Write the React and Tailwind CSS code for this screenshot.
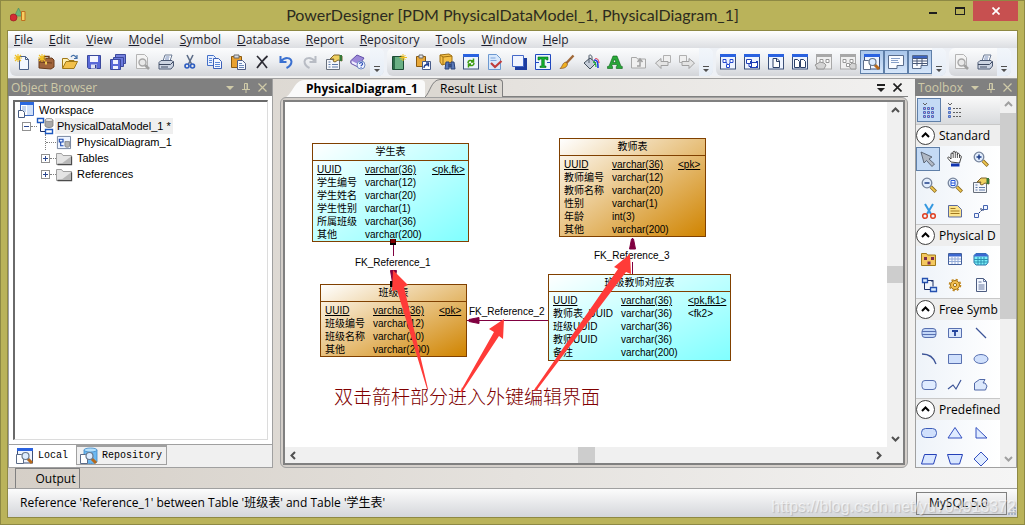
import clsx from "clsx";

const menus = ["File", "Edit", "View", "Model", "Symbol", "Database", "Report", "Repository", "Tools", "Window", "Help"];

const WindowFrame = ({ gray, children }) => (
    <>
        <rect x="0.5" y="0.5" width="15" height="14.5" fill={gray ? "#f0f0f0" : "#eef4ff"} stroke={gray ? "#a8a8a8" : "#3c5078"} />
        <rect x="0" y="0" width="16" height="3" fill={gray ? "#a8a8a8" : "#2a62e0"} />
        {children}
    </>
);

const Lens = ({ x = 6, y = 6, r = 4.8, children }) => (
    <>
        <path d={`M${x + r - 1} ${y + r - 1}l5 5`} stroke="#8a6a20" strokeWidth="3.4" />
        <path d={`M${x + r - 1} ${y + r - 1}l4.5 4.5`} stroke="#f0c850" strokeWidth="1.8" />
        <circle cx={x} cy={y} r={r} fill="#e2edfc" stroke="#76849c" strokeWidth="1.3" />
        {children}
    </>
);

const spark = <path d="M4 0v8M0 4h8M1 1l6 6M7 1l-6 6" stroke="#f0c020" strokeWidth="1.1" />;

const icons = {
    newFile: (
        <>
            <path d="M5.5 2.5h6l3 3v10h-9z" fill="#f4f8ff" stroke="#4a6088" />
            <path d="M11.5 2.5v3h3" fill="none" stroke="#4a6088" />
            {spark}
        </>
    ),
    newProject: (
        <>
            <path d="M6 4.5v-2h5v2" fill="none" stroke="#6a3c1c" strokeWidth="1.4" />
            <path d="M1 5l13-1 2 2v7l-3 2-12-1z" fill="#a0643c" stroke="#6a3c1c" />
            <path d="M1 8l13 1" stroke="#6a3c1c" />
            <path d="M7 7.500h2v3H7z" fill="#f0c850" />
            {spark}
        </>
    ),
    open: (
        <>
            <path d="M.5 14V4.500h5l1.500 2h5V8" fill="#fff0b0" stroke="#a07818" />
            <path d="M.5 14.500L4 7.500h11.500l-3.500 7z" fill="#f2c04a" stroke="#a07818" />
            <path d="M9 3c1.500-2.500 4-2 5.500 1m.5-3v3.500h-3" fill="none" stroke="#4470a8" strokeWidth="1.2" />
        </>
    ),
    save: (
        <>
            <path d="M1.500 1.500h13v13h-12l-1-1z" fill="#5a6ad8" stroke="#3a489c" />
            <path d="M4 2h8v6H4z" fill="#f4f6ff" />
            <path d="M5 10.500h6v4H5z" fill="#e0e4f4" />
            <path d="M9 11h1.500v3H9z" fill="#2c3a90" />
        </>
    ),
    saveAll: (
        <>
            <path d="M5.500.5h10v9h-10z" fill="#7480dc" stroke="#3a489c" />
            <path d="M3.500 3.500h10v9h-10z" fill="#6a78dc" stroke="#3a489c" />
            <path d="M.5 5.500h10v10H.5z" fill="#5a6ad8" stroke="#3a489c" />
            <path d="M3 6h5v4H3zM3 12h5v3H3z" fill="#f0f2ff" />
        </>
    ),
    preview: (
        <>
            <path d="M2.500.5h8l3 3v11h-11z" fill="#f4f4f4" stroke="#b4b4b4" />
            <path d="M11 11l4 4" stroke="#a0a0a0" strokeWidth="2.500" />
            <circle cx="8.500" cy="8.500" r="3.500" fill="#e8e8e8" stroke="#a8a8a8" strokeWidth="1.400" />
        </>
    ),
    print: (
        <>
            <path d="M5 7l2-6h7l-2 6z" fill="#fff" stroke="#6a7a94" />
            <path d="M7.500 3h4M7 5h4" stroke="#7088b8" />
            <path d="M1 8.500l2-2h11l1.500 1.500v4l-2.500 3H1z" fill="#ccd4e2" stroke="#4c5a74" />
            <path d="M1 10.500h11.500l3-3M3 13h7" fill="none" stroke="#3c4860" />
        </>
    ),
    cut: (
        <>
            <path d="M5 1l4.500 9M11 1l-4.500 9" stroke="#5c6c88" strokeWidth="1.600" />
            <circle cx="5" cy="12" r="2" fill="none" stroke="#2c5cc0" strokeWidth="1.600" />
            <circle cx="10.500" cy="12" r="2" fill="none" stroke="#2c5cc0" strokeWidth="1.600" />
        </>
    ),
    copy: (
        <>
            <path d="M1.500 1.500h6l2 2v8h-8z" fill="#e8f0ff" stroke="#4470c8" />
            <path d="M7.500 4.500h5l3 3v7h-8z" fill="#f4f8ff" stroke="#3c60b8" />
            <path d="M3 4.500h3M3 6.500h3M3 8.500h3M9 8.500h5M9 10.500h5M9 12.500h5" stroke="#5c88d8" />
        </>
    ),
    paste: (
        <>
            <path d="M1.500 2.500h10v11h-10z" fill="#e8a030" stroke="#8a5a10" />
            <path d="M4 1h5v3H4z" fill="#d8dce4" stroke="#6a6a6a" />
            <path d="M7.500 6.500h5l3 3v6h-8z" fill="#f4f8ff" stroke="#4c5a84" />
            <path d="M9 9.500h3M9 11.500h5M9 13.500h5" stroke="#6c88b8" />
        </>
    ),
    remove: <path d="M3 2c3 3 7 8 10 12M13.500 2C9 6 6 10 3 14" fill="none" stroke="#2c2c34" strokeWidth="1.700" />,
    undo: <path d="M2.500 2v6h6M3 7.500c4-5 10-4 10.500 0 0 3-2 5-5 6.500" fill="none" stroke="#3a70d0" strokeWidth="2" />,
    redo: <path d="M13.500 2v6h-6M13 7.500c-4-5-10-4-10.500 0 0 3 2 5 5 6.500" fill="none" stroke="#b8bcc4" strokeWidth="2" />,
    props: (
        <>
            <path d="M.5 5.500h13v10H.5z" fill="#f4f6fa" stroke="#68707c" />
            <path d="M2.500 8h2M2.500 10.500h2M2.500 13h2M6 10.500h6M6 13h6" stroke="#5c78a8" />
            <path d="M4 5l4-4h5l3 1v5l-4-1-3 2-2-1 1-2H4z" fill="#f0d060" stroke="#80642c" />
            <path d="M13.500 1H16v6h-2.500z" fill="#387838" />
        </>
    ),
    help: (
        <>
            <path d="M1 6.500L7 1l7 3-5 7-8-2z" fill="#9c88d8" stroke="#6450a8" />
            <path d="M1 6.500v3l8 4v-3" fill="#f0ecff" stroke="#6450a8" />
            <circle cx="11" cy="11" r="4" fill="#f0f4ff" stroke="#7088c0" />
            <path d="M9.600 10c0-2 3-2 3 0 0 1-1.500 1-1.500 2m0 .8v1" fill="none" stroke="#2c50b8" strokeWidth="1.200" />
        </>
    ),
    model: (
        <>
            <path d="M1.500 2.500h11v13h-11z" fill="#6ab084" stroke="#1c4c34" />
            <path d="M2 3h2v12H2z" fill="#2c6c48" />
            <path d="M12 0v7M8.500 3.500H16M9.500 1l5 5M14.500 1l-5 5" stroke="#f0c020" />
        </>
    ),
    shortcut: (
        <>
            <path d="M1.500 2.500h9v10h-9z" fill="#e8a838" stroke="#8a5a10" />
            <path d="M4 1h4v3H4z" fill="#e4e4e4" stroke="#6a6a6a" />
            <path d="M7.500 7.500h8v8h-8z" fill="#fff" stroke="#485c88" />
            <path d="M9 14c0-3 2-3.500 4-3.500m-2-1.500h2.500v3.500" fill="none" stroke="#1c3c90" strokeWidth="1.300" />
        </>
    ),
    find: (
        <>
            <path d="M1 1l9-1 3 2v6L3 11 1 8z" fill="#f4c048" stroke="#a07010" />
            <path d="M1 1l3 2v8M4 3l9-1" fill="none" stroke="#a07010" />
            <path d="M7 8h3v7H6zM12 8h3l1 7h-4zM10 10h2v3h-2z" fill="#5878b8" stroke="#2c4478" />
        </>
    ),
    refresh: (
        <WindowFrame>
            <path d="M5 9c0-3 3-3 5-2M10.500 4.500V8H8M11 9c0 3-3 3-5 2M5.500 13.500V10H8" fill="none" stroke="#3c9c10" strokeWidth="1.500" />
        </WindowFrame>
    ),
    check: (
        <>
            <path d="M1.500.5h8l4 4v11h-12z" fill="#d8e8fc" stroke="#6c98d0" />
            <path d="M3.500 4h5M3.500 6.500h6" stroke="#7ca4dc" />
            <path d="M4 9l4 4 6.500-6" fill="none" stroke="#c03c3c" strokeWidth="2.200" />
        </>
    ),
    shadow: (
        <>
            <path d="M4 4h12v12H4z" fill="#1c3ca0" />
            <path d="M1.500 1.500h11v11h-11z" fill="#f0f4ff" stroke="#4468c8" />
        </>
    ),
    textSize: (
        <>
            <path d="M.5.5h15v15H.5z" fill="#e8f4ff" stroke="#2048c0" />
            <path d="M3 3h10v3h-1.500l-.5-1H9.300v7H11v1.500H5V12h1.700V5H5l-.5 1H3z" fill="#10b030" stroke="#046818" strokeWidth=".6" />
            <path d="M0 8.500h4M12 8.500h4" stroke="#2048c0" />
        </>
    ),
    brush: (
        <>
            <path d="M14.500 1.500L7 9.500" stroke="#a06838" strokeWidth="2.400" />
            <path d="M7 8c-4 1-3 4-6 6.500 4 0 7-1 7.500-4.500z" fill="#f0b020" stroke="#80502c" strokeWidth=".7" />
        </>
    ),
    fill: (
        <>
            <path d="M1 9l6-5 6 5-6 6z" fill="#c4ccd8" stroke="#44505c" />
            <path d="M6 9V2c0-2 3-1 3 1v3" fill="none" stroke="#505c6c" />
            <path d="M11 6c3 0 4 1 4 8" fill="none" stroke="#2040e0" strokeWidth="1.600" />
            <path d="M12 5c2-1 3.500 0 4 4" fill="none" stroke="#e02040" />
            <path d="M10 8c2 0 3 1 3 5" fill="none" stroke="#20b040" strokeWidth="1.300" />
        </>
    ),
    font: <path d="M.5 14.500h5v-2l-.8-.3.6-1.700h4.400l.6 1.700-1 .3v2h6v-2l-1.300-.3L10 2H6L2 12.200l-1.500.3zM6 8.500L7.600 5 9 8.500z" fill="#28a838" stroke="#0c6018" strokeWidth=".6" />,
    up: (
        <>
            <path d="M.5 3.500h5l1 1.500h8v9H.5z" fill="#f0f0f0" stroke="#a8a8a8" />
            <path d="M6 12h3V6m-2.500 2L9 5l2.500 3" fill="none" stroke="#a0a0a0" strokeWidth="1.500" />
        </>
    ),
    back: (
        <>
            <path d="M8.500 1.500h7v7h-7z" fill="#f0f0f0" stroke="#b0b0b0" />
            <path d="M.5 9L6 4.500v3h7v4H6v3z" fill="#e4e4e4" stroke="#a0a0a0" />
        </>
    ),
    forward: (
        <>
            <path d="M.5 1.500h7v7h-7z" fill="#f0f0f0" stroke="#b0b0b0" />
            <path d="M15.500 9L10 4.500v3H3v4h7v3z" fill="#e4e4e4" stroke="#a0a0a0" />
        </>
    ),
    viewTree: (
        <WindowFrame>
            <path d="M3 5.500h3v3H3zM10 5.500h3v3h-3zM6.500 10.500h3v3h-3zM6 8l1.500 2.500M10.500 8L9 10.500" fill="#fff" stroke="#2448d0" />
        </WindowFrame>
    ),
    viewNodes: (
        <WindowFrame>
            <path d="M2.500 5.500h5v4h-5zM7.500 8.500h6v5h-6zM5 9.500v3h2.500" fill="#fff" stroke="#2040b8" />
            <path d="M6 7h2v2H6zM12 7h2v2h-2zM6 12h2v2H6zM12 12h2v2h-2z" fill="#2040b8" />
        </WindowFrame>
    ),
    viewPage: (
        <WindowFrame>
            <path d="M5 4.500h4l2.500 2.500v6.500H5z" fill="#fff" stroke="#2c4068" />
            <path d="M8.500 4.500v3h3" fill="none" stroke="#2c4068" />
        </WindowFrame>
    ),
    viewPages: (
        <WindowFrame>
            <path d="M2.500 5.500h3l2 2v6h-5zM8.500 5.500h3l2 2v6h-5z" fill="#fff" stroke="#2c4068" />
        </WindowFrame>
    ),
    grayTree: (
        <WindowFrame gray>
            <path d="M4 5.500h3v3H4zM10 5.500h3v3h-3z" fill="#fff" stroke="#989898" />
            <path d="M-1 11l5-3 4 1 2 2-2 4H2z" fill="#d4d4d4" stroke="#989898" />
        </WindowFrame>
    ),
    grayTree2: (
        <WindowFrame gray>
            <path d="M3 5.500h3v3H3zM10 5.500h3v3h-3zM6.500 9.500h3v3h-3z" fill="#fff" stroke="#989898" />
            <path d="M9 12l3-3 4 1v5h-5z" fill="#d4d4d4" stroke="#989898" />
        </WindowFrame>
    ),
    browser: (
        <WindowFrame>
            <path d="M-.5 6.500h5l2 2v7h-7z" fill="#fff" stroke="#5c6c88" />
            <path d="M10 10l5 5" stroke="#b86818" strokeWidth="3" />
            <circle cx="8.500" cy="8" r="3.500" fill="#dcecff" stroke="#68788c" strokeWidth="1.200" />
        </WindowFrame>
    ),
    repository: (
        <>
            <path d="M3 2v12c1 2 12 2 13 0V2z" fill="#6cb8f0" stroke="#3c88c8" strokeWidth=".8" />
            <ellipse cx="9.500" cy="2" rx="6.500" ry="2" fill="#b4e0fc" stroke="#3c88c8" strokeWidth=".8" />
            <path d="M-.5 6.500h5l2 2v7h-7z" fill="#fff" stroke="#5c6c88" />
            <path d="M10 10l5 5" stroke="#b86818" strokeWidth="3" />
            <circle cx="8.500" cy="8" r="3.500" fill="#dcecff" stroke="#68788c" strokeWidth="1.200" />
        </>
    ),
    output: (
        <>
            <path d="M.5 1.500h15v10H9v3H.5z" fill="#fafcff" stroke="#586c8c" />
            <path d="M3 4.500h9M3 6.500h7M3 8.500h8" stroke="#88a0c8" />
        </>
    ),
    list: (
        <>
            <path d="M.5 1.500h15v10H9v3H.5z" fill="#fafcff" stroke="#586c8c" />
            <path d="M1 4.500h14M1 7h14M1 9.500h14M5 2v10M10 2v10" stroke="#485878" />
            <path d="M1 2h14v2H1z" fill="#3c64c0" />
        </>
    ),
    pointer: <path d="M1 1l3 11 2.500-2.500L12 15.500l2.500-2.500-5.500-5L12 6z" fill="#b0b8c4" stroke="#545c6c" strokeWidth=".9" />,
    hand: (
        <>
            <path d="M4 11L1 7.500c-1-1.500 1-2 2-.5l1 1V3c0-1.500 2-1.500 2 0V1.500C6-.2 8.200-.2 8.200 1.500V2c0-1.500 2.200-1.500 2.200.2V3.500c0-1.500 2.100-1.500 2.100.2V5c1-1 2 0 1.800 1L12.500 12z" fill="#fff" stroke="#303030" strokeWidth=".9" />
            <path d="M6.200 3v4M8.300 2v5M10.400 3v4M12.500 4v3" stroke="#303030" strokeWidth=".8" />
            <path d="M4 12.500h8.500v3H4z" fill="#1034b0" />
        </>
    ),
    zoomIn: <Lens><path d="M3.500 6h5M6 3.500v5" stroke="#1c3c88" strokeWidth="1.500" /></Lens>,
    zoomOut: <Lens><path d="M3.500 6h5" stroke="#1c3c88" strokeWidth="1.500" /></Lens>,
    zoomFit: <Lens><path d="M4 3.500h4v5H4zM4 6h4" fill="#fff" stroke="#2858d8" /></Lens>,
    scissors: (
        <>
            <path d="M4 1l6 10M12 1L6 11" stroke="#3498e0" strokeWidth="2" />
            <circle cx="4" cy="13" r="2.300" fill="none" stroke="#e04020" strokeWidth="1.500" />
            <circle cx="12" cy="13" r="2.300" fill="none" stroke="#e04020" strokeWidth="1.500" />
        </>
    ),
    note: (
        <>
            <path d="M1.500 2.500h9l4 4v7.500h-13z" fill="#fce48c" stroke="#5a6aa0" />
            <path d="M3.500 5.500h5M3.500 8h9M3.500 10.500h9" stroke="#a07820" />
        </>
    ),
    link: (
        <>
            <path d="M1.500 10.500h4v4h-4zM10.500 2.500h4v4h-4z" fill="#f0f4ff" stroke="#4464b0" />
            <path d="M6 10l4-4M7 6h3v3" fill="none" stroke="#1c3470" strokeDasharray="2 1" />
        </>
    ),
    package: (
        <>
            <path d="M.5 2.500h5l1 1.500h8v10.500H.5z" fill="#f4c860" stroke="#a07818" />
            <path d="M3 6h3v3H3zM10 6h3v3h-3zM6.500 10.500h3v3h-3z" fill="#7c2c50" />
        </>
    ),
    table: (
        <>
            <path d="M1.500 2.500h13v11h-13z" fill="#f8faff" stroke="#44609c" />
            <path d="M2 3h12v2.500H2z" fill="#3c68d0" />
            <path d="M2 8h12M2 10.500h12M5 6v7M8 6v7M11 6v7" stroke="#94acd8" />
        </>
    ),
    viewTable: (
        <>
            <path d="M3 2.500h10l2 2v7l-2 2.500H3l-2-2.500v-7z" fill="#7cf0f8" stroke="#2870a8" />
            <path d="M3 2.500h10l2 2v1H1v-1z" fill="#3c68d0" />
            <path d="M1 8.500h14M1 11h14M5 6v8M8 6v8M11 6v8" stroke="#2890b0" />
        </>
    ),
    reference: (
        <>
            <path d="M1.500 1.500h5v4h-5zM9.500 10.500h6v4h-6z" fill="#d8ecff" stroke="#2450b0" strokeWidth="1.300" />
            <path d="M3.500 5.500v7H9M7 3.500h5v6M10.500 5L12 3.500" fill="none" stroke="#1c3068" />
        </>
    ),
    procedure: (
        <>
            <circle cx="8" cy="8" r="4.500" fill="#f4c050" stroke="#a07010" />
            <circle cx="8" cy="8" r="5.500" fill="none" stroke="#c08820" strokeWidth="1.600" strokeDasharray="2.200 2.120" />
            <circle cx="8" cy="8" r="1.600" fill="#fff" stroke="#a07010" />
        </>
    ),
    file: (
        <>
            <path d="M3.500 1.500h7l3 3v10h-10z" fill="#f4f8ff" stroke="#4c5c80" />
            <path d="M10.500 1.500v3h3M5.500 5h3M5.500 8h6M5.500 10h6M5.500 12h6" fill="none" stroke="#6878a0" />
        </>
    ),
    title: (
        <>
            <rect x="1" y="3.500" width="14" height="9" rx="3" fill="#c4d8f8" stroke="#5870b0" />
            <path d="M1 6.500h14M1 9.500h14" stroke="#5870b0" />
        </>
    ),
    textBox: (
        <>
            <path d="M1.500 3.500h13v9h-13z" fill="#dce8fc" stroke="#5870b0" />
            <path d="M5 6h6M8 6v5" stroke="#24449c" strokeWidth="1.800" />
        </>
    ),
    line: <path d="M3 3l10 10" stroke="#3c5498" strokeWidth="1.300" />,
    arc: <path d="M1 3c7 0 12 4 14 10" fill="none" stroke="#3c5498" strokeWidth="1.300" />,
    rect: <path d="M1.500 3.500h13v9h-13z" fill="#d0e0fc" stroke="#5870b0" />,
    ellipse: <ellipse cx="8" cy="8" rx="7" ry="4.500" fill="#d0e0fc" stroke="#5870b0" />,
    rounded: <rect x="1" y="3.500" width="14" height="9" rx="3" fill="#e0ecff" stroke="#5870b0" />,
    polyline: <path d="M1 12l5-4 3 4 5-9" fill="none" stroke="#3c5498" strokeWidth="1.200" />,
    polygon: <path d="M1.500 13V6l5-3.500H12l-2 3.500h2l2 3-1.500 4z" fill="#dce8fc" stroke="#5068a8" />,
    octagon: <rect x=".5" y="3.500" width="15" height="9" rx="4" fill="#d0e0fc" stroke="#3c5cb8" />,
    triangle: <path d="M8 2.500L15 13H1z" fill="#e0ecff" stroke="#3450c0" />,
    rightTriangle: <path d="M3 2.500V13h11z" fill="#e0ecff" stroke="#3450c0" />,
    parallelogram: <path d="M3.500 3.500h12L12.500 13H.5z" fill="#d8e6ff" stroke="#2440b8" />,
    trapezoid: <path d="M.5 3.500h15l-3 9.500h-9z" fill="#d8e6ff" stroke="#2440b8" />,
    diamond: <path d="M8 1l7 7-7 7-7-7z" fill="#e0ecff" stroke="#3450c0" />,
    folder: (
        <>
            <path d="M.5 3.500h5l1.500 2h8.500v9H.5z" fill="#e4e4e4" stroke="#a0a0a0" />
            <path d="M1.500 14.500h14V6.500" fill="none" stroke="#4c4c4c" strokeWidth="1.300" />
            <path d="M5 14L15 6.500V14z" fill="#b8b8b8" />
        </>
    ),
    workspace: (
        <>
            <path d="M2.500.5h13v13h-13z" fill="#fff" stroke="#3c68c0" />
            <path d="M2 0h14v3H2z" fill="#2a68e0" />
            <path d="M4 5h4M4 7h4M4 9h4" stroke="#88a8d8" />
            <path d="M9 3h6v10H9z" fill="#d0e0f8" />
            <path d="M.5 8.500h4l2 2v5h-6z" fill="#fff" stroke="#485c80" />
        </>
    ),
    dataModel: (
        <>
            <path d="M.5.500h6v4h-6zM8.500 11.500h7v4h-7z" fill="#fff" stroke="#1c58c0" strokeWidth="1.400" />
            <path d="M3.500 5v8.500H8" fill="none" stroke="#1c3068" />
            <path d="M8 2v6c1 2 7 2 8 0V2z" fill="#a8a8a8" stroke="#707070" strokeWidth=".7" />
            <ellipse cx="12" cy="2" rx="4" ry="1.600" fill="#e8e8e8" stroke="#808080" strokeWidth=".7" />
        </>
    ),
    diagram: (
        <>
            <path d="M1.500 1.500h14v13h-14z" fill="#eef4ff" stroke="#70809c" />
            <path d="M3.500 4.500h4v3h-4zM5 8v3.500h3" fill="none" stroke="#1c48b0" strokeWidth="1.200" />
            <path d="M9.500 7v5c1 1.500 4 1.500 5 0V7z" fill="#b4b4b4" stroke="#707070" strokeWidth=".7" />
        </>
    ),
};

const Icon = ({ name, className }) => (
    <svg viewBox="0 0 16 16" className={clsx("size-4 shrink-0 overflow-visible", className)} aria-hidden="true">
        {icons[name]}
    </svg>
);

const toolbars = [
    ["newFile", "newProject", "open", "save", "saveAll", "preview", "print", "cut", "copy", "paste", "remove", "undo", "redo", "props", "help"],
    ["model", "shortcut", "find", "refresh", "check", "shadow", "textSize", "brush", "fill", "font", "up", "back", "forward"],
    ["viewTree", "viewNodes", "viewPage", "viewPages", "grayTree", "grayTree2", "browser", "output", "list"],
    ["preview", "print"],
];
const pressed = ["browser", "output", "list"];

const toolbox = [
    { title: "Standard", items: ["pointer", "hand", "zoomIn", "zoomOut", "zoomFit", "props", "scissors", "note", "link"] },
    { title: "Physical D", items: ["package", "table", "viewTable", "reference", "procedure", "file"] },
    { title: "Free Symb", items: ["title", "textBox", "line", "arc", "rect", "ellipse", "rounded", "polyline", "polygon"] },
    { title: "Predefined", items: ["octagon", "triangle", "rightTriangle", "parallelogram", "trapezoid", "diamond"] },
];

const entities = [
    {
        name: "学生表",
        box: "left-[27px] top-[41px] w-[157px] to-[#80ffff]",
        cols: ["w-12", "w-[67px]"],
        rows: [["UUID", "varchar(36)", "<pk,fk>"], ["学生编号", "varchar(12)"], ["学生姓名", "varchar(20)"], ["学生性别", "varchar(1)"], ["所属班级", "varchar(36)"], ["其他", "varchar(200)"]],
    },
    {
        name: "班级表",
        box: "left-[35px] top-[182px] w-[147px] to-[#d08400]",
        cols: ["w-12", "w-[66px]"],
        rows: [["UUID", "varchar(36)", "<pk>"], ["班级编号", "varchar(12)"], ["班级名称", "varchar(20)"], ["其他", "varchar(200)"]],
    },
    {
        name: "教师表",
        box: "left-[274px] top-[36px] w-[147px] to-[#d08400]",
        cols: ["w-12", "w-[66px]"],
        rows: [["UUID", "varchar(36)", "<pk>"], ["教师编号", "varchar(12)"], ["教师名称", "varchar(20)"], ["性别", "varchar(1)"], ["年龄", "int(3)"], ["其他", "varchar(200)"]],
    },
    {
        name: "班级教师对应表",
        box: "left-[263px] top-[172px] w-[183px] to-[#80ffff] pb-px",
        cols: ["w-17", "w-[67px]"],
        rows: [["UUID", "varchar(36)", "<pk,fk1>"], ["教师表_UUID", "varchar(36)", "<fk2>"], ["班级UUID", "varchar(36)"], ["教师UUID", "varchar(36)"], ["备注", "varchar(200)"]],
    },
];

function Chevron({ dir, className }) {
    const paths = { up: "M1 6l3.500-3.500L8 6", down: "M1 3l3.500 3.500L8 3", left: "M6 1L2.500 4.500 6 8", right: "M3 1l3.500 3.500L3 8" };
    return (
        <svg viewBox="0 0 9 9" className={clsx("size-[9px]", className)} fill="none" stroke="currentColor" strokeWidth="2" aria-hidden="true">
            <path d={paths[dir]} />
        </svg>
    );
}

function PanelHeader({ title }) {
    return (
        <div className="flex h-[17px] shrink-0 items-center bg-[#808080] pr-[2px] pl-[3px] text-[#cfcaa8]">
            <h2 className="flex-1 text-xs leading-4">{title}</h2>
            <button aria-label="Menu" className="flex w-4 justify-center">
                <svg viewBox="0 0 8 4" className="h-1 w-2" fill="currentColor"><path d="M0 0h8L4 4z" /></svg>
            </button>
            <button aria-label="Pin" className="flex w-4 justify-center">
                <svg viewBox="0 0 8 10" className="h-[10px] w-2" fill="none" stroke="currentColor"><path d="M2.500 6V.5h3V6M5 1v5M0 6.500h8M4 7v3" /></svg>
            </button>
            <button aria-label="Close" className="flex w-4 justify-center">
                <svg viewBox="0 0 9 9" className="size-[9px]" stroke="currentColor" strokeWidth="1.200"><path d="M.5.5l8 8M8.500.5l-8 8" /></svg>
            </button>
        </div>
    );
}

function TitleBar() {
    return (
        <header className="grid h-[29px] shrink-0 grid-cols-[1fr_auto_1fr] items-start">
            <svg viewBox="0 0 16 14" className="mt-[7px] ml-[3px] h-[14px] w-4" aria-hidden="true">
                <path d="M8.500 0l4 8h-8z" fill="#6cb878" stroke="#3c8464" strokeWidth=".6" />
                <circle cx="3.500" cy="9.500" r="3.500" fill="#d42c34" stroke="#90141c" strokeWidth=".6" />
                <path d="M11.500 3.500h3.500v9h-3.500z" fill="#f8d060" stroke="#c07020" />
            </svg>
            <h1 className="pt-[2px] text-base leading-6 text-[#2c2b20] [font-family:Lato,sans-serif]">PowerDesigner [PDM PhysicalDataModel_1, PhysicalDiagram_1]</h1>
            <div className="flex justify-end">
                <button aria-label="Minimize" className="flex h-5 w-[27px] items-center justify-center pt-1">
                    <span className="h-[2px] w-2 bg-[#1e1e1e]" />
                </button>
                <button aria-label="Maximize" className="flex h-5 w-[27px] items-center justify-center">
                    <span className="h-2 w-[10px] border border-t-2 border-[#1e1e1e]" />
                </button>
                <button aria-label="Close" className="flex h-5 w-[45px] items-center justify-center bg-[#c75050] text-white">
                    <svg viewBox="0 0 8 8" className="size-2" stroke="currentColor" strokeWidth="1.700"><path d="M.5.5l7 7M7.500.5l-7 7" /></svg>
                </button>
            </div>
        </header>
    );
}

function Toolbars() {
    return (
        <div className="flex h-[30px] shrink-0 gap-[3px] border-b-2 border-[#f0f0f0] bg-[#eef1f6] pl-[2px]">
            {toolbars.map((group, i) => (
                <div key={i} className="flex rounded-md bg-linear-to-b from-[#fbfcfd] via-[#eceef1] to-[#d3d5d9]">
                    {group.map((name) => (
                        <button
                            key={name}
                            aria-label={name}
                            className={clsx("flex h-7 w-6 items-center justify-center", pressed.includes(name) && i === 2 && "my-[2px] h-6! border border-[#5f7fa8] bg-linear-to-b from-[#a9c6ea] to-[#d6e6fa]")}
                        >
                            <Icon name={name} />
                        </button>
                    ))}
                    <button aria-label="Toolbar options" className="flex w-[14px] items-end justify-center rounded-r-md bg-linear-to-b from-[#f2f6fb] to-[#e6edf6] pb-1">
                        <svg viewBox="0 0 6 6" className="size-[6px]" fill="#505050"><path d="M0 0h6v1H0zM0 3h6L3 6z" /></svg>
                    </button>
                </div>
            ))}
        </div>
    );
}

const Expander = ({ open }) => (
    <button aria-label="Toggle" className="z-10 flex size-[9px] shrink-0 items-center justify-center border border-[#919191] bg-white">
        <svg viewBox="0 0 5 5" className="size-[5px]" stroke="#2c4890"><path d={open ? "M0 2.500h5" : "M0 2.500h5M2.500 0v5"} /></svg>
    </button>
);

function ObjectBrowser() {
    return (
        <aside className="flex w-[265px] shrink-0 flex-col border-r border-b border-[#a0a0a0] bg-[#f0f0f0]">
            <PanelHeader title="Object Browser" />
            <div className="flex min-h-0 flex-1 flex-col border-b border-l border-[#a0a0a0] bg-white p-1">
                <ul className="flex-1 border-t-2 border-r border-b border-l-2 border-[#dcdcdc] border-t-[#6a6a6a] border-l-[#6a6a6a] pl-[3px] text-[11px] leading-4 text-black [font-family:'Liberation_Sans',sans-serif]">
                    <li className="flex h-4 items-center gap-[5px]">
                        <Icon name="workspace" />
                        Workspace
                    </li>
                    <li className="flex h-4 items-center pl-1">
                        <Expander open />
                        <span className="w-[6px] border-t border-dotted border-[#808080]" />
                        <Icon name="dataModel" />
                        <span className="ml-[2px] bg-[#efefef] px-[2px]">PhysicalDataModel_1 *</span>
                    </li>
                    <li className="ml-[27px] flex h-4 items-center border-l border-dotted border-[#808080]">
                        <span className="w-[10px] border-t border-dotted border-[#808080]" />
                        <Icon name="diagram" className="size-[15px]!" />
                        <span className="pl-[6px]">PhysicalDiagram_1</span>
                    </li>
                    {["Tables", "References"].map((t) => (
                        <li key={t} className="ml-[23px] flex h-4 items-center">
                            <Expander />
                            <span className="w-[6px] border-t border-dotted border-[#808080]" />
                            <Icon name="folder" />
                            <span className="pl-[5px]">{t}</span>
                        </li>
                    ))}
                </ul>
            </div>
            <div className="flex h-[22px] shrink-0 items-start border-l border-[#a0a0a0] text-[10px] text-black [font-family:'Liberation_Mono',monospace]">
                <button className="flex h-[22px] w-[67px] items-center gap-[5px] bg-white pl-2">
                    <Icon name="browser" />
                    Local
                </button>
                <button className="flex h-5 w-[91px] items-center gap-[5px] border border-t-2 border-[#a0a0a0] bg-[#f0f0f0] pl-1">
                    <Icon name="repository" />
                    Repository
                </button>
            </div>
        </aside>
    );
}

function Entity({ name, box, cols, rows }) {
    return (
        <section className={clsx("absolute border border-[#804000] bg-linear-to-br/srgb from-white text-[10px] text-black [font-family:'Liberation_Sans','Noto_Sans_CJK_SC',sans-serif]", box)}>
            <h3 className="border-b border-[#804000] text-center leading-4">{name}</h3>
            <table className="mt-[2px] ml-1 table-fixed leading-[13px]">
                <tbody>
                    {rows.map(([field, type, key], i) => (
                        <tr key={field} className={clsx("h-[13px] whitespace-nowrap", i === 0 && "underline")}>
                            <td className={clsx("p-0", cols[0])}><div className={clsx("h-[13px]", cols[0])}>{field}</div></td>
                            <td className="p-0"><div className={clsx("h-[13px]", cols[1])}>{type}</div></td>
                            <td className="p-0"><div className="h-[13px]">{key}</div></td>
                        </tr>
                    ))}
                </tbody>
            </table>
        </section>
    );
}

function Diagram() {
    return (
        <div className="relative min-w-0 flex-1 overflow-hidden bg-white text-[10px] text-black [font-family:'Liberation_Sans','Noto_Sans_CJK_SC',sans-serif]">
            {entities.map((e) => (
                <Entity key={e.name} {...e} />
            ))}
            <svg viewBox="0 0 602 343" className="absolute top-0 left-0 h-[343px] w-[602px]" aria-hidden="true">
                <g stroke="#800040" fill="#800040">
                    <path d="M108.500 140v14M108.500 168v14M347.500 160v12M347.500 136v10M182 218.500h81" />
                    <path d="M105.500 168.500h6l-2 12h-2zM346.500 137h2l2 10h-6zM184 217.500v2l10 2v-6z" />
                </g>
                <path d="M105 137h6v6h-6zM105 179h6v6h-6z" fill="#000" />
                <path d="M105.500 137h5v4h-5z" fill="#800000" />
            </svg>
            <span className="absolute top-[155px] left-[70px] leading-3">FK_Reference_1</span>
            <span className="absolute top-[204px] left-[184px] leading-3">FK_Reference_2</span>
            <span className="absolute top-[148px] left-[309px] leading-3">FK_Reference_3</span>
            <p className="absolute top-[284px] left-[49px] text-[19px] leading-6 font-light whitespace-nowrap text-[#800000]">双击箭杆部分进入外键编辑界面</p>
            <svg viewBox="0 0 602 343" className="absolute top-0 left-0 h-[343px] w-[602px]" fill="#ff3b38" aria-hidden="true">
                <path d="M108 168l15 15-4 2 24 102h-1L112 188l-5 1z" />
                <path d="M219 217l-1 20-4-3-37 56h-2l34-60-5-3z" />
                <path d="M345 152l1 20-5-2-90 119-2-1 84-121-4-2z" />
            </svg>
        </div>
    );
}

function Editor() {
    return (
        <main className="flex min-w-0 flex-1 flex-col text-black">
            <div className="flex h-[18px] shrink-0 items-end text-xs">
                <svg viewBox="0 0 26 18" className="h-[18px] w-[26px] shrink-0" aria-hidden="true"><path d="M6 18C13 14 14 2 24 1h2v17z" fill="#fafafa" /></svg>
                <button className="h-[17px] w-[119px] rounded-tr-sm bg-[#fafafa] text-left leading-4 font-bold">PhysicalDiagram_1</button>
                <svg viewBox="0 0 15 18" className="h-[18px] w-[15px] shrink-0" aria-hidden="true">
                    <path d="M0 18C5 14 6 1 15 .5V18z" fill="#dcd8d2" />
                    <path d="M0 18C5 14 6 1 15 .5" fill="none" stroke="#808080" />
                </svg>
                <button className="h-[18px] w-[63px] rounded-tr-sm border-t border-r border-[#808080] bg-[#dcd8d2] text-left leading-4">Result List</button>
                <div className="flex h-full flex-1 items-center justify-end gap-2 border-b border-[#808080] pr-[6px]">
                    <button aria-label="Tab list">
                        <svg viewBox="0 0 8 8" className="size-2" fill="#202020"><path d="M0 0h8v2H0zM0 4h8L4 8z" /></svg>
                    </button>
                    <button aria-label="Close tab">
                        <svg viewBox="0 0 9 9" className="size-[9px]" stroke="#202020" strokeWidth="1.600"><path d="M.5.5l8 8M8.500.5l-8 8" /></svg>
                    </button>
                </div>
            </div>
            <div className="flex min-h-0 flex-1 rounded-md border border-[#a0a0a0] bg-[#d4cfca] p-[2px]">
                <div className="flex min-w-0 flex-1 flex-col border-2 border-[#808080] bg-[#f0f0f0] text-[#505050]">
                    <div className="flex min-h-0 flex-1">
                        <Diagram />
                        <div className="flex w-4 shrink-0 flex-col items-center justify-between bg-[#f0f0f0]">
                            <button aria-label="Scroll up" className="flex h-[17px] items-center"><Chevron dir="up" /></button>
                            <div className="h-[17px] w-full bg-[#cdcdcd]" />
                            <button aria-label="Scroll down" className="flex h-[17px] items-center"><Chevron dir="down" /></button>
                        </div>
                    </div>
                    <div className="mr-4 flex h-4 shrink-0 items-center justify-between">
                        <button aria-label="Scroll left" className="flex w-[17px] justify-center"><Chevron dir="left" /></button>
                        <div className="h-full w-[17px] bg-[#cdcdcd]" />
                        <button aria-label="Scroll right" className="flex w-[17px] justify-center"><Chevron dir="right" /></button>
                    </div>
                </div>
            </div>
        </main>
    );
}

function Toolbox() {
    return (
        <aside className="flex w-[102px] shrink-0 flex-col border-b border-[#a0a0a0] bg-[#f0f0f0] text-black">
            <PanelHeader title="Toolbox" />
            <div className="flex min-h-0 flex-1 border-x border-[#a0a0a0]">
                <div className="min-w-0 flex-1 overflow-hidden bg-linear-to-r from-[#eef3f9] to-white">
                    <div className="flex h-7 items-center gap-[2px] bg-linear-to-b from-[#fafafa] to-[#d8dadd] pl-px">
                        <button aria-label="Icon view" className="flex size-6 items-center justify-center border border-[#5f7fa8] bg-[#c4daf5]">
                            <svg viewBox="0 0 14 16" className="h-4 w-[14px]">
                                <path d="M1 1l2 2 2-2" fill="none" stroke="#606060" />
                                <path d="M1.500 5.500h2v2h-2zM5.500 5.500h2v2h-2zM9.500 5.500h2v2h-2zM1.500 9.500h2v2h-2zM5.500 9.500h2v2h-2zM9.500 9.500h2v2h-2zM1.500 13.500h2v2h-2zM5.500 13.500h2v2h-2zM9.500 13.500h2v2h-2z" fill="#e898b8" stroke="#4c6cc0" />
                            </svg>
                        </button>
                        <button aria-label="List view" className="flex size-6 items-center justify-center">
                            <svg viewBox="0 0 14 16" className="h-4 w-[14px] overflow-visible">
                                <path d="M0 1l2 2 2-2" fill="none" stroke="#606060" />
                                <path d="M.5 5.500h2v2h-2zM.5 9.500h2v2h-2zM.5 13.500h2v2h-2z" fill="#90a8e0" stroke="#5070c0" />
                                <path d="M5 6.500h9M5 10.500h9M5 14.500h9" stroke="#606060" strokeDasharray="2 1" />
                            </svg>
                        </button>
                    </div>
                    {toolbox.map((section) => (
                        <section key={section.title}>
                            <h3 className="flex h-[22px] items-center gap-1 overflow-hidden border-t border-[#c8c8c8] bg-[#eeeeee] text-xs whitespace-nowrap">
                                <button aria-label="Collapse" className="flex size-[19px] shrink-0 items-center justify-center rounded-full border border-[#404040] bg-white">
                                    <Chevron dir="up" className="size-[9px]" />
                                </button>
                                {section.title}
                            </h3>
                            <div className="grid grid-cols-[repeat(3,26px)]">
                                {section.items.map((name) => (
                                    <button
                                        key={name}
                                        aria-label={name}
                                        className={clsx("flex h-[26px] items-center justify-center", name === "pointer" && "my-px mr-[2px] h-6! border border-[#5f7fa8] bg-[#c4daf5]")}
                                    >
                                        <Icon name={name} />
                                    </button>
                                ))}
                            </div>
                        </section>
                    ))}
                </div>
                <div className="flex w-4 shrink-0 flex-col items-center text-[#a0a0a0]">
                    <button aria-label="Scroll up" className="flex h-[17px] items-center"><Chevron dir="up" /></button>
                    <div className="min-h-0 w-full flex-1">
                        <div className="h-[61%] bg-[#cdcdcd]" />
                    </div>
                    <button aria-label="Scroll down" className="flex h-[17px] items-center"><Chevron dir="down" /></button>
                </div>
            </div>
        </aside>
    );
}

export default function App() {
    return (
        <div className="relative flex h-screen flex-col overflow-hidden border border-[#8e8944] bg-[#bab35a] px-[6px] pb-[6px] text-xs [font-family:'Open_Sans','Noto_Sans_CJK_SC',sans-serif]">
            <TitleBar />
            <div className="flex min-h-0 flex-1 flex-col border border-[#8e8944] bg-linear-to-r from-[#d5cfc7] to-[#f5f5f5]">
                <nav className="flex h-[17px] shrink-0 items-center gap-4 bg-linear-to-b from-white to-[#dcdee2] pl-[6px] leading-4 text-[#1e1e2c]">
                    {menus.map((m) => (
                        <button key={m}><u>{m[0]}</u>{m.slice(1)}</button>
                    ))}
                </nav>
                <Toolbars />
                <div className="flex min-h-0 flex-1 gap-[7px] border-t border-[#a0a0a0]">
                    <ObjectBrowser />
                    <Editor />
                    <Toolbox />
                </div>
                <div className="flex h-[21px] shrink-0 border-b border-[#a0a0a0] pl-[7px] text-black">
                    <button className="w-[65px] border-x border-t border-[#808080] pl-4">Output</button>
                </div>
                <footer className="flex h-7 shrink-0 items-center bg-linear-to-b from-[#fcfcfc] to-[#d4d6da] pl-3 text-black">
                    <p className="flex-1">Reference 'Reference_1' between Table '班级表' and Table '学生表'</p>
                    <span className="mr-px flex h-[23px] w-[91px] items-center border border-[#808080] pl-3">MySQL 5.0</span>
                    <svg viewBox="0 0 9 9" className="mt-4 size-[9px]" fill="#a8b4c8" aria-hidden="true">
                        <path d="M6 0h2v2H6zM3 3h2v2H3zM6 3h2v2H6zM0 6h2v2H0zM3 6h2v2H3zM6 6h2v2H6z" />
                    </svg>
                </footer>
            </div>
            <span className="pointer-events-none absolute right-2 bottom-[5px] text-base leading-6 text-white/60 [text-shadow:1px_1px_1px_rgba(120,120,120,0.35)] [font-family:'Liberation_Sans',sans-serif]">https://blog.csdn.net/yu704913372</span>
        </div>
    );
}
